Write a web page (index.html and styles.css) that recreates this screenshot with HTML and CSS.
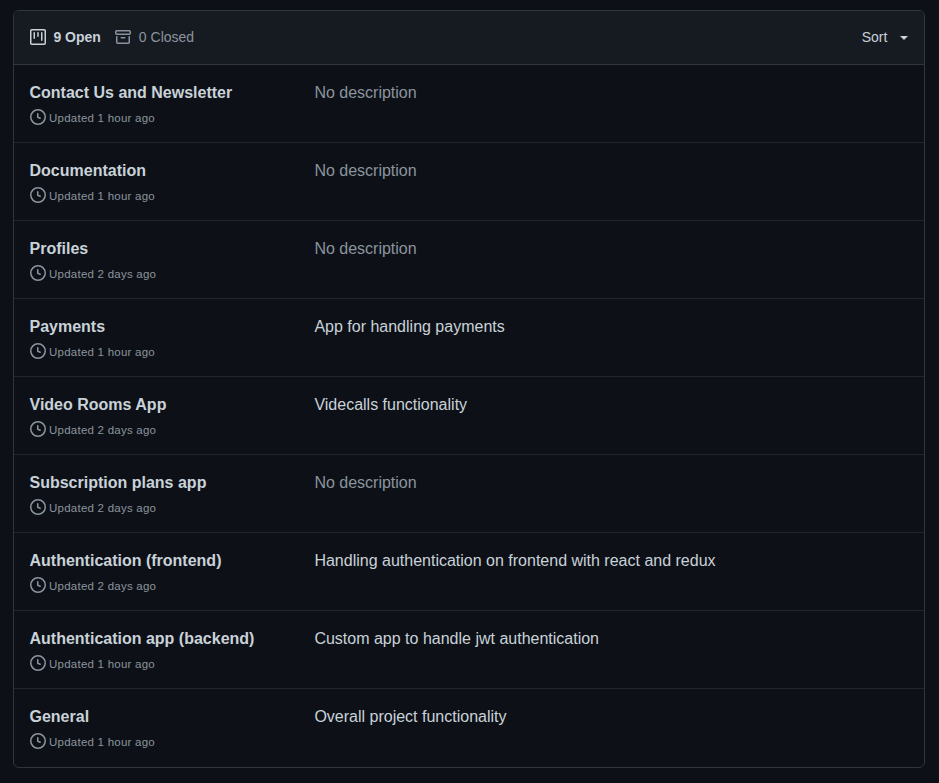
FILE: index.html
```html
<!DOCTYPE html>
<html lang="en">
<head>
<meta charset="utf-8">
<title>Projects</title>
<link rel="stylesheet" href="styles.css">
</head>
<body>
<svg class="sprite" aria-hidden="true">
  <symbol id="clock" viewBox="0 0 16 16"><path fill-rule="evenodd" d="M1.5 8a6.5 6.5 0 1113 0 6.5 6.5 0 01-13 0zM8 0a8 8 0 100 16A8 8 0 008 0zm.5 4.75a.75.75 0 00-1.5 0v3.5a.75.75 0 00.471.696l2.5 1a.75.75 0 00.557-1.392L8.5 7.742V4.75z"/></symbol>
</svg>
<main class="box">
  <header class="box-header">
    <nav class="states">
      <a class="state selected"><svg class="icon" viewBox="0 0 16 16"><path fill-rule="evenodd" d="M1.75 0A1.75 1.75 0 000 1.75v12.5C0 15.216.784 16 1.75 16h12.5A1.75 1.75 0 0016 14.25V1.75A1.75 1.75 0 0014.25 0H1.75zM1.5 1.75a.25.25 0 01.25-.25h12.5a.25.25 0 01.25.25v12.5a.25.25 0 01-.25.25H1.75a.25.25 0 01-.25-.25V1.75zM11.75 3a.75.75 0 00-.75.75v7.5a.75.75 0 001.5 0v-7.5a.75.75 0 00-.75-.75zm-8.25.75a.75.75 0 011.5 0v5.5a.75.75 0 01-1.5 0v-5.5zM8 3a.75.75 0 00-.75.75v3.5a.75.75 0 001.5 0v-3.5A.75.75 0 008 3z"/></svg><span>9 Open</span></a>
      <a class="state"><svg class="icon" viewBox="0 0 16 16"><path fill-rule="evenodd" d="M1.75 2.5a.25.25 0 00-.25.25v1.5c0 .138.112.25.25.25h12.5a.25.25 0 00.25-.25v-1.5a.25.25 0 00-.25-.25H1.75zM0 2.75C0 1.784.784 1 1.75 1h12.5c.966 0 1.75.784 1.75 1.75v1.5A1.75 1.75 0 0114.25 6H1.75A1.75 1.75 0 010 4.25v-1.5zM1.75 7a.75.75 0 01.75.75v5.5c0 .138.112.25.25.25h10.5a.25.25 0 00.25-.25v-5.5a.75.75 0 011.5 0v5.5A1.75 1.75 0 0113.25 15H2.75A1.75 1.75 0 011 13.25v-5.5A.75.75 0 011.75 7zm4.5 1a.75.75 0 000 1.5h3.5a.75.75 0 000-1.5h-3.5z"/></svg><span>0 Closed</span></a>
    </nav>
    <a class="sort">Sort<span class="caret"></span></a>
  </header>
  <section class="row"><div><h4>Contact Us and Newsletter</h4><p class="updated"><svg class="icon"><use href="#clock"/></svg><span>Updated 1 hour ago</span></p></div><p class="description empty">No description</p></section>
  <section class="row"><div><h4>Documentation</h4><p class="updated"><svg class="icon"><use href="#clock"/></svg><span>Updated 1 hour ago</span></p></div><p class="description empty">No description</p></section>
  <section class="row"><div><h4>Profiles</h4><p class="updated"><svg class="icon"><use href="#clock"/></svg><span>Updated 2 days ago</span></p></div><p class="description empty">No description</p></section>
  <section class="row"><div><h4>Payments</h4><p class="updated"><svg class="icon"><use href="#clock"/></svg><span>Updated 1 hour ago</span></p></div><p class="description">App for handling payments</p></section>
  <section class="row"><div><h4>Video Rooms App</h4><p class="updated"><svg class="icon"><use href="#clock"/></svg><span>Updated 2 days ago</span></p></div><p class="description">Videcalls functionality</p></section>
  <section class="row"><div><h4>Subscription plans app</h4><p class="updated"><svg class="icon"><use href="#clock"/></svg><span>Updated 2 days ago</span></p></div><p class="description empty">No description</p></section>
  <section class="row"><div><h4>Authentication (frontend)</h4><p class="updated"><svg class="icon"><use href="#clock"/></svg><span>Updated 2 days ago</span></p></div><p class="description">Handling authentication on frontend with react and redux</p></section>
  <section class="row"><div><h4>Authentication app (backend)</h4><p class="updated"><svg class="icon"><use href="#clock"/></svg><span>Updated 1 hour ago</span></p></div><p class="description">Custom app to handle jwt authentication</p></section>
  <section class="row"><div><h4>General</h4><p class="updated"><svg class="icon"><use href="#clock"/></svg><span>Updated 1 hour ago</span></p></div><p class="description">Overall project functionality</p></section>
</main>
</body>
</html>
```
FILE: styles.css
```css
* { box-sizing: border-box; }
body {
  margin: 0;
  padding: 10px 14px 0 13px;
  background: #0d1117;
  color: #c9d1d9;
  font: 14px/21px "Liberation Sans", Arial, sans-serif;
}
h4, p { margin: 0; }
.sprite { display: none; }
.icon { width: 16px; height: 16px; flex: none; fill: currentColor; }
.box { border: 1px solid #30363d; border-radius: 6px; overflow: hidden; }
.box-header {
  display: flex;
  align-items: center;
  justify-content: space-between;
  height: 54px;
  padding: 0 16px;
  background: #161b22;
  border-bottom: 1px solid #30363d;
}
.states { display: flex; gap: 14.6px; }
.state { display: flex; align-items: center; gap: 7.4px; color: #8b949e; }
.state .icon { margin-bottom: 1px; }
.state.selected { color: #c9d1d9; font-weight: 600; }
.sort { display: flex; align-items: center; gap: 12.6px; }
.caret { border: 4px solid transparent; border-top-color: currentColor; border-bottom: 0; }
.row {
  display: grid;
  grid-template-columns: 284.4px 1fr;
  height: 78px;
  padding: 16px 16px 0;
  border-bottom: 1px solid #21262d;
}
.row:last-child { border-bottom: 0; }
.row h4, .description { font-size: 16px; line-height: 24px; }
.row h4 { margin-left: -0.5px; }
.updated { display: flex; align-items: center; gap: 3px; height: 24px; color: #8b949e; font-size: 11.5px; letter-spacing: 0.24px; }
.updated span { padding-top: 2px; }
.empty { color: #8b949e; }
```
